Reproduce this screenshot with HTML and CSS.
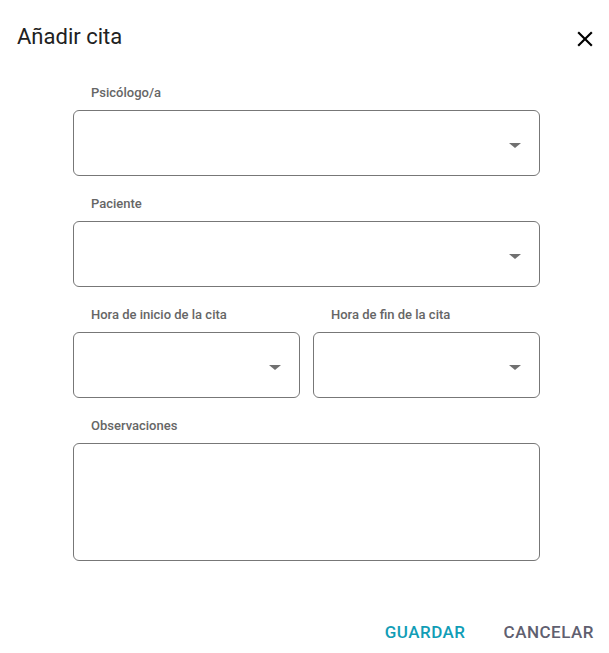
FILE: index.html
```html
<!DOCTYPE html>
<html lang="es">
<head>
<meta charset="utf-8">
<link rel="stylesheet" href="styles.css">
</head>
<body>
<div class="dialog">
  <div class="header">
    <h2 class="title">Añadir cita</h2>
    <button class="close" aria-label="Cerrar">
      <svg width="26" height="26" viewBox="0 0 24 24"><path d="M19 6.41L17.59 5 12 10.59 6.41 5 5 6.41 10.59 12 5 17.59 6.41 19 12 13.41 17.59 19 19 17.59 13.41 12z" fill="#000"/></svg>
    </button>
  </div>
  <div class="form">
    <div class="field">
      <div class="label">Psicólogo/a</div>
      <div class="box select"><span class="arrow"></span></div>
    </div>
    <div class="field">
      <div class="label">Paciente</div>
      <div class="box select"><span class="arrow"></span></div>
    </div>
    <div class="row">
      <div class="field">
        <div class="label">Hora de inicio de la cita</div>
        <div class="box select"><span class="arrow"></span></div>
      </div>
      <div class="field">
        <div class="label">Hora de fin de la cita</div>
        <div class="box select"><span class="arrow"></span></div>
      </div>
    </div>
    <div class="field">
      <div class="label">Observaciones</div>
      <div class="box textarea"></div>
    </div>
  </div>
  <div class="actions">
    <button class="btn primary">GUARDAR</button>
    <button class="btn secondary">CANCELAR</button>
  </div>
</div>
</body>
</html>
```
FILE: styles.css
```css
* { box-sizing: border-box; }
html, body { margin: 0; padding: 0; background: #fff; }
body { font-family: Roboto, "Noto Sans", sans-serif; }
.dialog { width: 609px; height: 653px; position: relative; }
.header { display: flex; align-items: flex-start; justify-content: space-between; padding: 24px 11px 0 17px; height: 50px; }
.title { margin: 0; font-size: 22px; line-height: 26px; font-weight: 400; color: #212121; }
.close { border: 0; background: none; padding: 0; width: 26px; height: 26px; display: block; margin-top: 2px; }
.close svg { display: block; }
.form { margin: 35px 0 0 73px; width: 467px; display: flex; flex-direction: column; gap: 20px; }
.row { display: flex; gap: 13px; }
.row .field { flex: 1; }
.label { font-size: 13px; line-height: 16px; font-weight: 500; color: #666; padding-left: 18px; margin-bottom: 9px; }
.box { border: 1px solid #777; border-radius: 6px; height: 66px; position: relative; }
.textarea { height: 118px; }
.arrow { position: absolute; right: 18px; top: 32px; width: 0; height: 0; border-left: 6px solid transparent; border-right: 6px solid transparent; border-top: 5px solid #707070; }
.actions { position: absolute; right: 15px; top: 622px; display: flex; gap: 38px; }
.btn { border: 0; background: none; padding: 0; font-family: Roboto, sans-serif; font-size: 17px; font-weight: 500; line-height: 20px; letter-spacing: 0.5px; }
.primary { color: #119db6; }
.secondary { color: #5f6070; }
```
